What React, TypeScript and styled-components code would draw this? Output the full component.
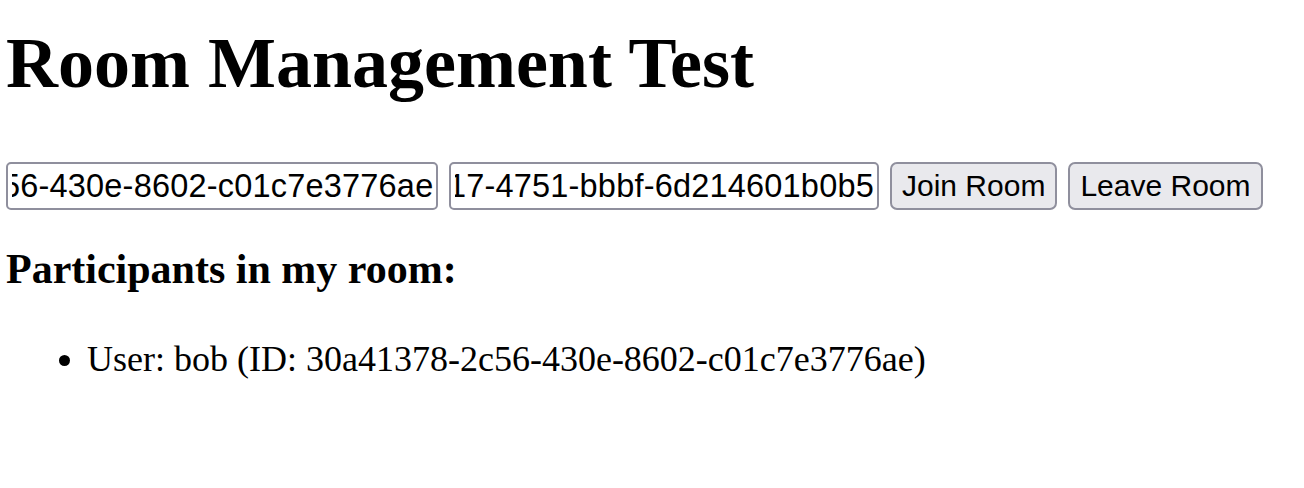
import React, { useEffect, useRef, useState } from "react"
import styled, { createGlobalStyle } from "styled-components"

const GlobalStyle = createGlobalStyle`
  html, body {
    margin: 0;
    padding: 0;
    background: #ffffff;
    color: #000000;
  }
  body {
    font-family: "Liberation Serif", "Times New Roman", serif;
  }
`

const StyledPage = styled.div`
  padding: 22px 0 0 6px;
`

const StyledTitle = styled.h1`
  margin: 0;
  font-size: 72px;
  line-height: 82px;
  font-weight: bold;
`

const StyledControls = styled.div`
  margin-top: 58px;
  display: flex;
  align-items: center;
  gap: 11px;
`

const StyledInput = styled.input<{ $width: number }>`
  box-sizing: border-box;
  width: ${props => props.$width}px;
  height: 48px;
  padding: 0 3px 0 4px;
  border: 2px solid #8f8f9d;
  border-radius: 5px;
  background: #ffffff;
  color: #000000;
  font-family: "Liberation Sans", Arial, sans-serif;
  font-size: 32.5px;
  letter-spacing: 0.2px;
  outline: none;
`

const StyledButton = styled.button`
  box-sizing: border-box;
  height: 48px;
  padding: 0 10px;
  border: 2px solid #8f8f9d;
  border-radius: 7px;
  background: #e9e9ed;
  color: #000000;
  font-family: "Liberation Sans", Arial, sans-serif;
  font-size: 30px;
  cursor: pointer;
`

const StyledSubtitle = styled.h3`
  margin: 35px 0 0 0;
  font-size: 42px;
  line-height: 48px;
  font-weight: bold;
`

const StyledList = styled.ul`
  margin: 46px 0 0 0;
  padding-left: 81px;
  font-size: 36px;
  line-height: 41px;
`

const StyledItem = styled.li``

type Participant = { id: string; name: string }

// input that keeps the end of its value in view, like a field that was just typed into
const TailInput: React.FC<{ value: string; width: number; onChange: (v: string) => void }> = ({
  value,
  width,
  onChange,
}) => {
  const ref = useRef<HTMLInputElement>(null)
  useEffect(() => {
    if (ref.current) ref.current.scrollLeft = ref.current.scrollWidth
  }, [value])
  return (
    <StyledInput
      ref={ref}
      type="text"
      $width={width}
      value={value}
      onChange={e => onChange(e.target.value)}
    />
  )
}

const App: React.FC = () => {
  const [userId, setUserId] = useState("30a41378-2c56-430e-8602-c01c7e3776ae")
  const [roomId, setRoomId] = useState("5e8c1f2a-9d17-4751-bbbf-6d214601b0b5")
  const participants: Participant[] = [{ id: "30a41378-2c56-430e-8602-c01c7e3776ae", name: "bob" }]

  return (
    <>
      <GlobalStyle />
      <StyledPage>
        <StyledTitle>Room Management Test</StyledTitle>
        <StyledControls>
          <TailInput value={userId} width={432} onChange={setUserId} />
          <TailInput value={roomId} width={430} onChange={setRoomId} />
          <StyledButton>Join Room</StyledButton>
          <StyledButton>Leave Room</StyledButton>
        </StyledControls>
        <StyledSubtitle>Participants in my room:</StyledSubtitle>
        <StyledList>
          {participants.map(p => (
            <StyledItem key={p.id}>
              User: {p.name} (ID: {p.id})
            </StyledItem>
          ))}
        </StyledList>
      </StyledPage>
    </>
  )
}

export default App
